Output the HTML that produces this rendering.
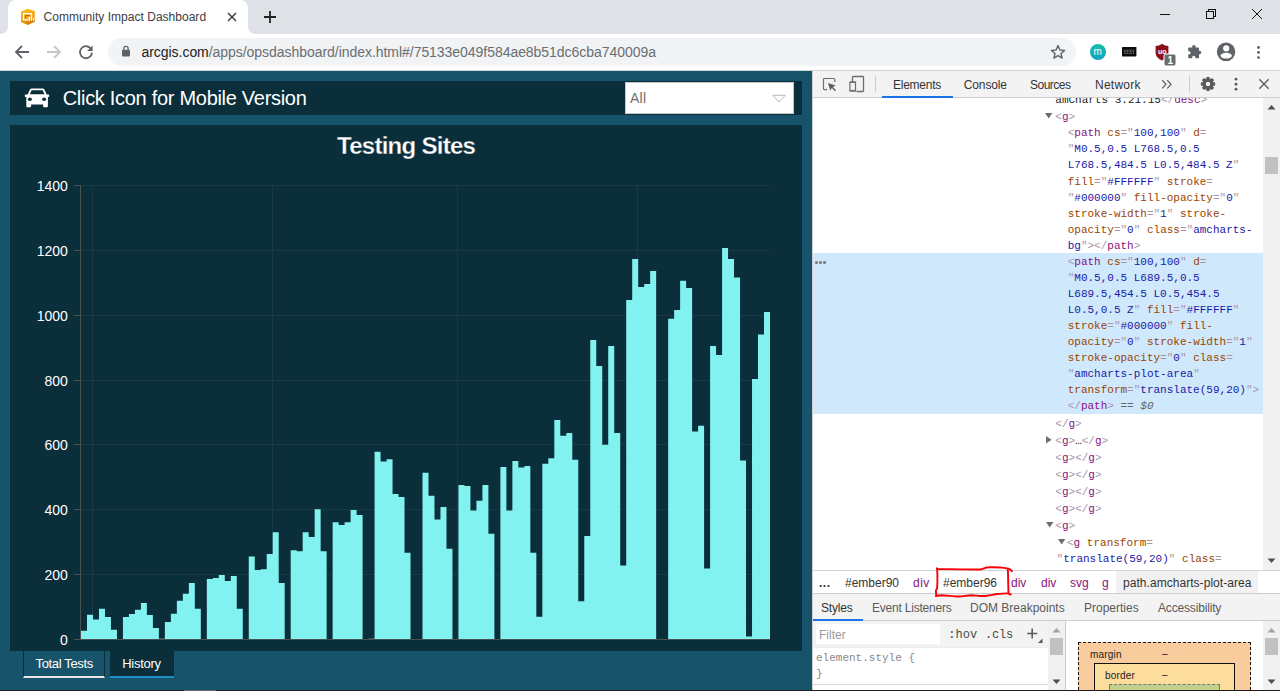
<!DOCTYPE html>
<html><head><meta charset="utf-8"><title>Community Impact Dashboard</title>
<style>
*{box-sizing:border-box;margin:0;padding:0}
html,body{width:1280px;height:691px;overflow:hidden;background:#fff}
body{position:relative;font-family:"Liberation Sans",sans-serif;font-size:12px;color:#333}
.abs{position:absolute}
.t{position:absolute;white-space:nowrap;line-height:1}
/* chrome */
#tabstrip{left:0;top:0;width:1280px;height:34px;background:#dee1e6}
#tab{left:8px;top:0;width:240px;height:34px;background:#fff;border-radius:8px 8px 0 0}
#toolbar{left:0;top:34px;width:1280px;height:36px;background:#fff}
#tbline{left:0;top:70px;width:1280px;height:1px;background:#d0d3d6}
#omni{left:108px;top:38px;width:968px;height:28px;border-radius:14px;background:#f1f3f4}
/* page */
#page{left:0;top:71px;width:812px;height:619px;background:#17536b}
#hdr{left:10px;top:81px;width:792px;height:34px;background:#0b2e3b}
#panel{left:10px;top:125px;width:792px;height:526px;background:#0b2e3b}
#sel{left:625px;top:82px;width:169px;height:32px;background:#fff;border:1px solid #c8c8c8}
/* devtools */
#dt{left:812px;top:71px;width:468px;height:619px;background:#fff;border-left:1px solid #d0d0d0}
#dtbar{left:813px;top:71px;width:467px;height:27px;background:#f3f3f3;border-bottom:1px solid #cdcdcd}
.mono{font-family:"Liberation Mono",monospace;font-size:11px}
#tree{left:813px;top:98px;width:450px;height:473px;overflow:hidden}
.ln{position:absolute;left:0;white-space:pre;height:16px;line-height:16px;font-family:"Liberation Mono",monospace;font-size:11px;color:#333}
.tg{color:#881280}.p{color:#a894a6}.an{color:#994500}.av{color:#1a1aa6}
.tx{color:#222}.eq{color:#666;font-style:italic}
#bottomline{left:0;top:690px;width:1280px;height:1px;background:#1f1a1a}
</style></head><body>
<!-- ===== Chrome tab strip ===== -->
<div id="tabstrip" class="abs"></div>
<div id="tab" class="abs"></div>
<div id="toolbar" class="abs"></div>
<div id="omni" class="abs"></div>
<div id="tbline" class="abs"></div>
<!-- tab flares -->
<svg class="abs" style="left:0;top:26px" width="256" height="8" viewBox="0 0 256 8"><path d="M0 8 C5 8 8 5 8 0 V8 Z M256 8 C251 8 248 5 248 0 V8 Z" fill="#fff"/></svg>
<!-- favicon -->
<svg class="abs" style="left:20px;top:8px" width="16" height="18" viewBox="0 0 16 18">
<defs><linearGradient id="fg" x1="0" y1="0" x2="0.35" y2="1"><stop offset="0" stop-color="#fbc31a"/><stop offset="0.65" stop-color="#f2a312"/><stop offset="1" stop-color="#d97a06"/></linearGradient></defs>
<path d="M7.8 0.8 L14.8 3.2 V13.8 L7.8 17 L1 14 V3.4 Z" fill="url(#fg)"/>
<path d="M8.2 11.8 H3.5 V5.6 H11.5 V7.4" fill="none" stroke="#fff" stroke-width="1.2"/>
<path d="M5.6 9.8 V7.6 H9.6" fill="none" stroke="#b86a08" stroke-width="1"/>
<rect x="8.5" y="8.9" width="1.5" height="3.9" fill="#fff"/><rect x="10.8" y="7.7" width="1.4" height="5.1" fill="#fff"/><rect x="13.1" y="9.7" width="1.1" height="3.1" fill="#fff"/>
</svg>
<div class="t" style="left:43.5px;top:11.0px;font-family:'Liberation Sans',sans-serif;font-size:12px;color:#3c4043;letter-spacing:0.02px;">Community Impact Dashboard</div>
<!-- tab close -->
<svg class="abs" style="left:227px;top:12px" width="10" height="10" viewBox="0 0 10 10"><path d="M1 1 L9 9 M9 1 L1 9" stroke="#3c4043" stroke-width="1.5" fill="none"/></svg>
<!-- new tab plus -->
<svg class="abs" style="left:263px;top:10px" width="14" height="14" viewBox="0 0 14 14"><path d="M7 1 V13 M1 7 H13" stroke="#202124" stroke-width="1.8" fill="none"/></svg>
<!-- window controls -->
<svg class="abs" style="left:1150px;top:0" width="130" height="30" viewBox="0 0 130 30" fill="none" stroke="#111" stroke-width="1" shape-rendering="crispEdges">
<path d="M10 14.5 H20"/>
<path d="M56.5 11.5 H63.5 V18.5 H56.5 Z M58.5 11.5 V9.5 H65.5 V16.5 H63.5"/>
</svg>
<svg class="abs" style="left:1251px;top:8px" width="12" height="12" viewBox="0 0 12 12"><path d="M1 1 L11 11 M11 1 L1 11" stroke="#111" stroke-width="1" fill="none"/></svg>
<!-- nav arrows -->
<svg class="abs" style="left:14px;top:44px" width="16" height="16" viewBox="0 0 16 16"><path d="M15 8 H2.5 M8 2 L2 8 L8 14" stroke="#5f6368" stroke-width="1.8" fill="none"/></svg>
<svg class="abs" style="left:46px;top:44px" width="16" height="16" viewBox="0 0 16 16"><path d="M1 8 H13.5 M8 2 L14 8 L8 14" stroke="#c4c7ca" stroke-width="1.8" fill="none"/></svg>
<svg class="abs" style="left:78px;top:44px" width="16" height="16" viewBox="0 0 16 16"><path d="M13.2 5.2 A6 6 0 1 0 14 8.6" stroke="#5f6368" stroke-width="1.8" fill="none"/><path d="M14.6 1.6 V7 H9.2 Z" fill="#5f6368"/></svg>
<!-- lock -->
<svg class="abs" style="left:121px;top:45px" width="10" height="12" viewBox="0 0 10 12"><rect x="1" y="4.8" width="8" height="6.6" rx="0.8" fill="#5f6368"/><path d="M2.9 5 V3.4 A2.1 2.1 0 0 1 7.1 3.4 V5" stroke="#5f6368" stroke-width="1.3" fill="none"/></svg>
<div class="t" style="left:141.5px;top:45.0px;font-family:'Liberation Sans',sans-serif;font-size:14px;color:#6a6e73;letter-spacing:-0.044px;"><span style="color:#202124">arcgis.com</span>/apps/opsdashboard/index.html#/75133e049f584ae8b51dc6cba740009a</div>
<!-- star -->
<svg class="abs" style="left:1050px;top:44px" width="16" height="16" viewBox="0 0 16 16"><path d="M8 1.6 L9.9 6 L14.6 6.4 L11 9.5 L12.1 14.1 L8 11.6 L3.9 14.1 L5 9.5 L1.4 6.4 L6.1 6 Z" fill="none" stroke="#5f6368" stroke-width="1.4" stroke-linejoin="round"/></svg>
<!-- ext: m circle -->
<div class="abs" style="left:1090px;top:44px;width:16px;height:16px;border-radius:8px;background:linear-gradient(#15bfa8,#0fa2c3)"></div>
<div class="t" style="left:1093.6px;top:47.2px;font-size:10px;color:#fff;letter-spacing:0.3px">m</div>
<!-- keyboard -->
<svg class="abs" style="left:1122px;top:47px" width="15" height="10" viewBox="0 0 15 10"><rect x="0" y="0" width="14.4" height="9.4" rx="0.6" fill="#0c0c0c"/><path d="M2 3.2 H12.6 M2 4.8 H12.6" stroke="#9a9a9a" stroke-width="0.9" stroke-dasharray="0.9 0.6"/><path d="M2.5 6.4 H12" stroke="#8a8a8a" stroke-width="0.8" stroke-dasharray="1.6 0.5"/></svg>
<!-- ublock -->
<svg class="abs" style="left:1154px;top:43px" width="24" height="24" viewBox="0 0 24 24"><path d="M8 0.8 C10 2.4 12.3 3 14.4 3 V9.5 C14.4 13.5 11.5 16 8 17.4 C4.5 16 1.6 13.5 1.6 9.5 V3 C3.7 3 6 2.4 8 0.8 Z" fill="#8b1018"/><rect x="10" y="11" width="12" height="12" rx="2" fill="#6b6b6b" stroke="#fff" stroke-width="1"/></svg>
<div class="t" style="left:1158px;top:48px;font-size:7px;font-weight:bold;color:#fff">uo</div>
<div class="t" style="left:1167.5px;top:55.5px;font-size:10px;font-weight:bold;color:#fff">1</div>
<!-- puzzle -->
<svg class="abs" style="left:1186px;top:44px" width="16" height="16" viewBox="0 0 16 16"><path d="M6.2 2.6 A1.7 1.7 0 0 1 9.6 2.6 V3.4 H12.2 C12.7 3.4 13 3.7 13 4.2 V6.8 H13.6 A1.7 1.7 0 0 1 13.6 10.2 H13 V13.4 C13 13.9 12.7 14.2 12.2 14.2 H9.4 V13.4 A1.6 1.6 0 0 0 6.2 13.4 V14.2 H3 C2.5 14.2 2.2 13.9 2.2 13.4 V10.4 H3 A1.6 1.6 0 0 0 3 7.2 H2.2 V4.2 C2.2 3.7 2.5 3.4 3 3.4 H6.2 Z" fill="#5f6368"/></svg>
<!-- avatar -->
<svg class="abs" style="left:1216px;top:42px" width="20" height="20" viewBox="0 0 20 20"><circle cx="10.05" cy="9.85" r="9.25" fill="#5f6368"/><circle cx="10.2" cy="6.4" r="3.05" fill="#fff"/><ellipse cx="10.2" cy="13.7" rx="5.75" ry="2.9" fill="#fff"/></svg>
<!-- menu dots -->
<svg class="abs" style="left:1255px;top:45px" width="7" height="16" viewBox="0 0 7 16" fill="#5f6368"><circle cx="3.5" cy="2.5" r="1.45"/><circle cx="3.5" cy="7.4" r="1.45"/><circle cx="3.5" cy="12.6" r="1.45"/></svg>

<!-- ===== Page ===== -->
<div id="page" class="abs"></div>
<div id="hdr" class="abs"></div>
<div id="panel" class="abs"></div>
<div id="sel" class="abs"></div>
<!-- car icon -->
<svg class="abs" style="left:20px;top:82px" width="40" height="30" viewBox="0 0 40 30">
<path fill="#fff" d="M7.6 12.4 L10 7.6 C10.4 6.9 11 6.5 11.8 6.5 H22.6 C23.4 6.5 24 6.9 24.4 7.6 L26.7 12.4 H28.4 C28.9 12.4 29.2 12.7 29.2 13.2 V14.3 C29.2 14.8 28.9 15.1 28.4 15.1 H27.9 V23.9 C27.9 24.8 27.4 25.3 26.5 25.3 H24.5 C23.6 25.3 23.1 24.8 23.1 23.9 V22.4 H11.1 V23.9 C11.1 24.8 10.6 25.3 9.7 25.3 H7.7 C6.8 25.3 6.3 24.8 6.3 23.9 V15.1 H5.6 C5.1 15.1 4.8 14.8 4.8 14.3 V13.2 C4.8 12.7 5.1 12.4 5.6 12.4 Z M9.8 12.2 H24.5 L22.7 8.2 H11.6 Z"/>
<ellipse cx="9.9" cy="17.3" rx="2" ry="1.8" fill="#0b2e3b"/><ellipse cx="24.1" cy="17.3" rx="2" ry="1.8" fill="#0b2e3b"/>
</svg>
<!-- select arrow -->
<svg class="abs" style="left:771px;top:93px" width="16" height="11" viewBox="0 0 16 11"><path d="M1.8 2.3 H14.2 L8 9 Z" fill="none" stroke="#b9b9b9" stroke-width="1"/></svg>
<!-- bottom tabs -->
<div class="abs" style="left:23px;top:651px;width:82px;height:27px;background:#17536b;border-left:1px solid #0b2e3b;border-right:1px solid #0b2e3b;border-bottom:2px solid #e6e6e6"></div>
<div class="abs" style="left:110px;top:651px;width:64px;height:27px;background:#0b2e3b;border-bottom:2px solid #1f8ec4"></div>
<div class="t" style="left:62.7px;top:88.2px;font-family:'Liberation Sans',sans-serif;font-size:20px;color:#fff;letter-spacing:-0.293px;">Click Icon for Mobile Version</div>
<div class="t" style="left:630.0px;top:91.0px;font-family:'Liberation Sans',sans-serif;font-size:14px;color:#6e6e6e;letter-spacing:0.25px;">All</div>
<div class="t" style="left:337.0px;top:133.6px;font-family:'Liberation Sans',sans-serif;font-size:24px;color:#fff;letter-spacing:-0.725px;font-weight:bold;-webkit-text-stroke:0.3px #0b2e3b">Testing Sites</div>
<div class="t" style="left:35.6px;top:656.8px;font-family:'Liberation Sans',sans-serif;font-size:13px;color:#fff;letter-spacing:-0.36px;">Total Tests</div>
<div class="t" style="left:122.2px;top:656.8px;font-family:'Liberation Sans',sans-serif;font-size:13px;color:#fff;letter-spacing:-0.267px;">History</div>

<svg class="abs" style="left:0;top:0" width="812" height="691" viewBox="0 0 812 691">
<g id="grid" stroke="#183a46" stroke-width="1" shape-rendering="crispEdges">
<line x1="81" y1="574.5" x2="770" y2="574.5"/>
<line x1="81" y1="509.5" x2="770" y2="509.5"/>
<line x1="81" y1="444.5" x2="770" y2="444.5"/>
<line x1="81" y1="380.5" x2="770" y2="380.5"/>
<line x1="81" y1="315.5" x2="770" y2="315.5"/>
<line x1="81" y1="250.5" x2="770" y2="250.5"/>
<line x1="81" y1="185.5" x2="770" y2="185.5"/>
<line x1="92.5" y1="185" x2="92.5" y2="639"/>
<line x1="272.5" y1="185" x2="272.5" y2="639"/>
<line x1="457.5" y1="185" x2="457.5" y2="639"/>
<line x1="637.5" y1="185" x2="637.5" y2="639"/>
</g>
<path d="M81.00,639.30L81.00,630.80L86.99,630.80L86.99,614.70L92.98,614.70L92.98,619.60L98.97,619.60L98.97,608.70L104.97,608.70L104.97,616.90L110.96,616.90L110.96,629.70L116.95,629.70L116.95,639.30L122.94,639.30L122.94,616.90L128.93,616.90L128.93,614.00L134.92,614.00L134.92,609.80L140.91,609.80L140.91,602.90L146.90,602.90L146.90,614.90L152.90,614.90L152.90,627.90L158.89,627.90L158.89,638.80L164.88,638.80L164.88,621.90L170.87,621.90L170.87,613.80L176.86,613.80L176.86,600.80L182.85,600.80L182.85,593.70L188.84,593.70L188.84,582.90L194.83,582.90L194.83,608.70L200.83,608.70L200.83,639.30L206.82,639.30L206.82,578.90L212.81,578.90L212.81,578.00L218.80,578.00L218.80,574.90L224.79,574.90L224.79,580.90L230.78,580.90L230.78,576.00L236.77,576.00L236.77,608.70L242.77,608.70L242.77,639.30L248.76,639.30L248.76,556.40L254.75,556.40L254.75,570.00L260.74,570.00L260.74,569.20L266.73,569.20L266.73,554.00L272.72,554.00L272.72,532.30L278.71,532.30L278.71,583.10L284.70,583.10L284.70,639.30L290.70,639.30L290.70,550.30L296.69,550.30L296.69,551.20L302.68,551.20L302.68,532.30L308.67,532.30L308.67,537.00L314.66,537.00L314.66,509.30L320.65,509.30L320.65,551.20L326.64,551.20L326.64,639.30L332.63,639.30L332.63,522.30L338.63,522.30L338.63,524.90L344.62,524.90L344.62,522.30L350.61,522.30L350.61,510.10L356.60,510.10L356.60,515.10L362.59,515.10L362.59,639.30L368.58,639.30L368.58,638.80L374.57,638.80L374.57,451.80L380.57,451.80L380.57,461.60L386.56,461.60L386.56,459.20L392.55,459.20L392.55,493.90L398.54,493.90L398.54,496.90L404.53,496.90L404.53,552.70L410.52,552.70L410.52,639.30L416.51,639.30L416.51,639.30L422.50,639.30L422.50,472.80L428.50,472.80L428.50,495.70L434.49,495.70L434.49,519.40L440.48,519.40L440.48,507.00L446.47,507.00L446.47,548.80L452.46,548.80L452.46,639.30L458.45,639.30L458.45,485.00L464.44,485.00L464.44,485.90L470.43,485.90L470.43,510.50L476.43,510.50L476.43,500.70L482.42,500.70L482.42,485.00L488.41,485.00L488.41,533.70L494.40,533.70L494.40,639.30L500.39,639.30L500.39,466.90L506.38,466.90L506.38,510.50L512.37,510.50L512.37,461.00L518.37,461.00L518.37,467.50L524.36,467.50L524.36,466.00L530.35,466.00L530.35,552.70L536.34,552.70L536.34,616.70L542.33,616.70L542.33,463.80L548.32,463.80L548.32,458.20L554.31,458.20L554.31,420.00L560.30,420.00L560.30,435.70L566.30,435.70L566.30,432.90L572.29,432.90L572.29,459.80L578.28,459.80L578.28,601.30L584.27,601.30L584.27,535.90L590.26,535.90L590.26,339.90L596.25,339.90L596.25,365.90L602.24,365.90L602.24,444.70L608.23,444.70L608.23,345.90L614.23,345.90L614.23,432.90L620.22,432.90L620.22,565.40L626.21,565.40L626.21,299.90L632.20,299.90L632.20,259.10L638.19,259.10L638.19,286.90L644.18,286.90L644.18,284.00L650.17,284.00L650.17,271.00L656.17,271.00L656.17,639.30L662.16,639.30L662.16,639.30L668.15,639.30L668.15,318.70L674.14,318.70L674.14,310.00L680.13,310.00L680.13,280.80L686.12,280.80L686.12,288.00L692.11,288.00L692.11,431.50L698.10,431.50L698.10,425.80L704.10,425.80L704.10,568.60L710.09,568.60L710.09,345.90L716.08,345.90L716.08,354.90L722.07,354.90L722.07,248.10L728.06,248.10L728.06,259.10L734.05,259.10L734.05,277.60L740.04,277.60L740.04,460.60L746.03,460.60L746.03,636.40L752.03,636.40L752.03,378.90L758.02,378.90L758.02,334.60L764.01,334.60L764.01,312.10L770.00,312.10L770.00,639.30Z" fill="#82f2f0"/>
<g id="axis" stroke="#4b5052" stroke-width="1" shape-rendering="crispEdges">
<line x1="74" y1="639.5" x2="80" y2="639.5"/>
<line x1="74" y1="574.5" x2="80" y2="574.5"/>
<line x1="74" y1="509.5" x2="80" y2="509.5"/>
<line x1="74" y1="444.5" x2="80" y2="444.5"/>
<line x1="74" y1="380.5" x2="80" y2="380.5"/>
<line x1="74" y1="315.5" x2="80" y2="315.5"/>
<line x1="74" y1="250.5" x2="80" y2="250.5"/>
<line x1="74" y1="185.5" x2="80" y2="185.5"/>
<line x1="80.5" y1="185" x2="80.5" y2="640"/>
<line x1="80" y1="639.5" x2="770" y2="639.5"/>
</g>
<g id="ylab" font-family="Liberation Sans, sans-serif" font-size="14" fill="#ffffff" text-anchor="end">
<text x="67.9" y="644.9">0</text>
<text x="67.9" y="579.9">200</text>
<text x="67.9" y="514.9">400</text>
<text x="67.9" y="449.9">600</text>
<text x="67.9" y="385.9">800</text>
<text x="67.9" y="320.9">1000</text>
<text x="67.9" y="255.9">1200</text>
<text x="67.9" y="190.9">1400</text>
</g>
</svg>
<!-- ===== DevTools ===== -->
<div id="dt" class="abs"></div>
<div id="dtbar" class="abs"></div>
<!-- toolbar icons -->
<svg class="abs" style="left:822px;top:77px" width="16" height="16" viewBox="0 0 16 16"><path d="M5 12.7 H2.5 C1.9 12.7 1.5 12.3 1.5 11.7 V2.5 C1.5 1.9 1.9 1.5 2.5 1.5 H11.8 C12.4 1.5 12.8 1.9 12.8 2.5 V5" fill="none" stroke="#6e6e6e" stroke-width="1.2"/><path d="M6 6 L13.6 8.6 L10.9 9.9 L14 13.3 L13 14.2 L9.9 10.9 L8.2 13.6 Z" fill="#5f5f5f"/></svg>
<svg class="abs" style="left:848px;top:75px" width="18" height="18" viewBox="0 0 18 18"><path d="M4.5 7 V2.3 C4.5 1.8 4.8 1.5 5.3 1.5 H14.7 C15.2 1.5 15.5 1.8 15.5 2.3 V15.7 C15.5 16.2 15.2 16.5 14.7 16.5 H8.5" fill="none" stroke="#6e6e6e" stroke-width="1.3"/><rect x="1.3" y="6.3" width="6.8" height="10.5" rx="0.9" fill="#6e6e6e"/><rect x="2.5" y="8" width="4.4" height="6.9" fill="#f3f3f3"/></svg>
<div class="abs" style="left:875px;top:76px;width:1px;height:16px;background:#cbcbcb"></div>
<div class="abs" style="left:882px;top:95.5px;width:71px;height:2px;background:#1a73e8"></div>
<div class="t" style="left:893.0px;top:79.0px;font-family:'Liberation Sans',sans-serif;font-size:12px;color:#333;letter-spacing:-0.243px;">Elements</div>
<div class="t" style="left:963.8px;top:79.0px;font-family:'Liberation Sans',sans-serif;font-size:12px;color:#333;letter-spacing:-0.133px;">Console</div>
<div class="t" style="left:1030.0px;top:79.0px;font-family:'Liberation Sans',sans-serif;font-size:12px;color:#333;letter-spacing:-0.5px;">Sources</div>
<div class="t" style="left:1095.0px;top:79.0px;font-family:'Liberation Sans',sans-serif;font-size:12px;color:#333;letter-spacing:0.25px;">Network</div>
<svg class="abs" style="left:1161px;top:79px" width="12" height="11" viewBox="0 0 12 11"><path d="M1.2 1.2 L5 5.3 L1.2 9.4 M6.2 1.2 L10 5.3 L6.2 9.4" fill="none" stroke="#5a5a5a" stroke-width="1.2"/></svg>
<div class="abs" style="left:1189px;top:76px;width:1px;height:16px;background:#cbcbcb"></div>
<!-- gear -->
<svg class="abs" style="left:1200px;top:76px" width="16" height="16" viewBox="0 0 16 16"><g fill="#5a5a5a"><circle cx="8" cy="8" r="5.5"/><g id="gt"><rect x="6.3" y="0.9" width="3.4" height="14.2" rx="0.5"/></g><use href="#gt" transform="rotate(45 8 8)"/><use href="#gt" transform="rotate(90 8 8)"/><use href="#gt" transform="rotate(135 8 8)"/></g><circle cx="8" cy="8" r="2.2" fill="#f3f3f3"/></svg>
<svg class="abs" style="left:1233px;top:77px" width="6" height="16" viewBox="0 0 6 16" fill="#5a5a5a"><circle cx="3" cy="2.2" r="1.4"/><circle cx="3" cy="7.2" r="1.4"/><circle cx="3" cy="12.2" r="1.4"/></svg>
<svg class="abs" style="left:1258px;top:78px" width="12" height="12" viewBox="0 0 12 12"><path d="M1.3 1.3 L10.7 10.7 M10.7 1.3 L1.3 10.7" stroke="#5a5a5a" stroke-width="1.3" fill="none"/></svg>
<!-- tree -->
<div id="tree" class="abs">
<div class="abs" style="left:0;top:155px;width:450px;height:161px;background:#cfe8fc"></div>
<div class="ln" style="left:242.3px;top:-6.2px"><span class="tx">amCharts 3.21.15</span><span class="p">&lt;/</span><span class="tg">desc</span><span class="p">&gt;</span></div>
<div class="ln" style="left:242.3px;top:10.7px"><span class="p">&lt;</span><span class="tg">g</span><span class="p">&gt;</span></div>
<div class="ln" style="left:254.7px;top:27.3px"><span class="p">&lt;</span><span class="tg">path</span> <span class="an">cs</span><span class="p">="</span><span class="av">100,100</span><span class="p">"</span> <span class="an">d</span><span class="p">=</span></div>
<div class="ln" style="left:254.7px;top:43.4px"><span class="p">"</span><span class="av">M0.5,0.5 L768.5,0.5</span></div>
<div class="ln" style="left:254.7px;top:59.4px"><span class="av">L768.5,484.5 L0.5,484.5 Z</span><span class="p">"</span></div>
<div class="ln" style="left:254.7px;top:75.5px"><span class="an">fill</span><span class="p">="</span><span class="av">#FFFFFF</span><span class="p">"</span> <span class="an">stroke</span><span class="p">=</span></div>
<div class="ln" style="left:254.7px;top:91.5px"><span class="p">"</span><span class="av">#000000</span><span class="p">"</span> <span class="an">fill-opacity</span><span class="p">="</span><span class="av">0</span><span class="p">"</span></div>
<div class="ln" style="left:254.7px;top:107.5px"><span class="an">stroke-width</span><span class="p">="</span><span class="av">1</span><span class="p">"</span> <span class="an">stroke-</span></div>
<div class="ln" style="left:254.7px;top:123.6px"><span class="an">opacity</span><span class="p">="</span><span class="av">0</span><span class="p">"</span> <span class="an">class</span><span class="p">="</span><span class="av">amcharts-</span></div>
<div class="ln" style="left:254.7px;top:139.7px"><span class="av">bg</span><span class="p">"&gt;</span><span class="p">&lt;/</span><span class="tg">path</span><span class="p">&gt;</span></div>
<div class="ln" style="left:254.7px;top:156.3px"><span class="p">&lt;</span><span class="tg">path</span> <span class="an">cs</span><span class="p">="</span><span class="av">100,100</span><span class="p">"</span> <span class="an">d</span><span class="p">=</span></div>
<div class="ln" style="left:254.7px;top:172.3px"><span class="p">"</span><span class="av">M0.5,0.5 L689.5,0.5</span></div>
<div class="ln" style="left:254.7px;top:188.3px"><span class="av">L689.5,454.5 L0.5,454.5</span></div>
<div class="ln" style="left:254.7px;top:204.3px"><span class="av">L0.5,0.5 Z</span><span class="p">"</span> <span class="an">fill</span><span class="p">="</span><span class="av">#FFFFFF</span><span class="p">"</span></div>
<div class="ln" style="left:254.7px;top:220.3px"><span class="an">stroke</span><span class="p">="</span><span class="av">#000000</span><span class="p">"</span> <span class="an">fill-</span></div>
<div class="ln" style="left:254.7px;top:236.3px"><span class="an">opacity</span><span class="p">="</span><span class="av">0</span><span class="p">"</span> <span class="an">stroke-width</span><span class="p">="</span><span class="av">1</span><span class="p">"</span></div>
<div class="ln" style="left:254.7px;top:252.3px"><span class="an">stroke-opacity</span><span class="p">="</span><span class="av">0</span><span class="p">"</span> <span class="an">class</span><span class="p">=</span></div>
<div class="ln" style="left:254.7px;top:268.3px"><span class="p">"</span><span class="av">amcharts-plot-area</span><span class="p">"</span></div>
<div class="ln" style="left:254.7px;top:284.3px"><span class="an">transform</span><span class="p">="</span><span class="av">translate(59,20)</span><span class="p">"</span><span class="p">&gt;</span></div>
<div class="ln" style="left:254.7px;top:300.3px"><span class="p">&lt;/</span><span class="tg">path</span><span class="p">&gt;</span><span class="eq"> == $0</span></div>
<div class="ln" style="left:242.3px;top:317.9px"><span class="p">&lt;/</span><span class="tg">g</span><span class="p">&gt;</span></div>
<div class="ln" style="left:242.3px;top:334.9px"><span class="p">&lt;</span><span class="tg">g</span><span class="p">&gt;</span><span class="tx">…</span><span class="p">&lt;/</span><span class="tg">g</span><span class="p">&gt;</span></div>
<div class="ln" style="left:242.3px;top:352.1px"><span class="p">&lt;</span><span class="tg">g</span><span class="p">&gt;</span><span class="p">&lt;/</span><span class="tg">g</span><span class="p">&gt;</span></div>
<div class="ln" style="left:242.3px;top:368.9px"><span class="p">&lt;</span><span class="tg">g</span><span class="p">&gt;</span><span class="p">&lt;/</span><span class="tg">g</span><span class="p">&gt;</span></div>
<div class="ln" style="left:242.3px;top:385.8px"><span class="p">&lt;</span><span class="tg">g</span><span class="p">&gt;</span><span class="p">&lt;/</span><span class="tg">g</span><span class="p">&gt;</span></div>
<div class="ln" style="left:242.3px;top:402.8px"><span class="p">&lt;</span><span class="tg">g</span><span class="p">&gt;</span><span class="p">&lt;/</span><span class="tg">g</span><span class="p">&gt;</span></div>
<div class="ln" style="left:242.3px;top:419.8px"><span class="p">&lt;</span><span class="tg">g</span><span class="p">&gt;</span></div>
<div class="ln" style="left:254.0px;top:436.5px"><span class="p">&lt;</span><span class="tg">g</span> <span class="an">transform</span><span class="p">=</span></div>
<div class="ln" style="left:243.6px;top:452.5px"><span class="p">"</span><span class="av">translate(59,20)</span><span class="p">"</span> <span class="an">class</span><span class="p">=</span></div>
<svg class="abs" style="left:232.0px;top:14.5px" width="8" height="6" viewBox="0 0 8 6"><path d="M0 0 H7.4 L3.7 5.6 Z" fill="#6e6e6e"/></svg>
<svg class="abs" style="left:233.0px;top:337.5px" width="6" height="8" viewBox="0 0 6 8"><path d="M0 0 V7.4 L5.6 3.7 Z" fill="#6e6e6e"/></svg>
<svg class="abs" style="left:232.5px;top:423.5px" width="8" height="6" viewBox="0 0 8 6"><path d="M0 0 H7.4 L3.7 5.6 Z" fill="#6e6e6e"/></svg>
<svg class="abs" style="left:244.5px;top:440.5px" width="8" height="6" viewBox="0 0 8 6"><path d="M0 0 H7.4 L3.7 5.6 Z" fill="#6e6e6e"/></svg>
<div class="abs" style="left:2px;top:162.5px;width:3px;height:3px;border-radius:2px;background:#777;box-shadow:4px 0 0 #777,8px 0 0 #777"></div>
</div>
<!-- tree scrollbar -->
<div class="abs" style="left:1263px;top:98px;width:17px;height:473px;background:#f1f1f1"></div>
<div class="abs" style="left:1265px;top:157px;width:13px;height:17px;background:#c1c1c1"></div>
<svg class="abs" style="left:1267px;top:104px" width="9" height="6" viewBox="0 0 9 6"><path d="M0.5 5.5 L4.5 1 L8.5 5.5 Z" fill="#505050"/></svg>
<svg class="abs" style="left:1267px;top:558px" width="9" height="6" viewBox="0 0 9 6"><path d="M0.5 0.5 L4.5 5 L8.5 0.5 Z" fill="#505050"/></svg>
<!-- breadcrumbs -->
<div class="abs" style="left:813px;top:570px;width:467px;height:24px;background:#fff;border-top:1px solid #d4d4d4;border-bottom:1px solid #cdcdcd"></div>
<div class="abs" style="left:1116px;top:571px;width:142px;height:22px;background:#f1f1f1"></div>
<div class="t" style="left:819.0px;top:576.5px;font-family:'Liberation Sans',sans-serif;font-size:12px;color:#333;letter-spacing:0.5px;font-weight:bold">...</div>
<div class="t" style="left:845.0px;top:576.5px;font-family:'Liberation Sans',sans-serif;font-size:12px;color:#333;">#ember90</div>
<div class="t" style="left:913.0px;top:576.5px;font-family:'Liberation Sans',sans-serif;font-size:12px;color:#881280;letter-spacing:0.5px;">div</div>
<div class="t" style="left:943.0px;top:576.5px;font-family:'Liberation Sans',sans-serif;font-size:12px;color:#333;">#ember96</div>
<div class="t" style="left:1011.0px;top:576.5px;font-family:'Liberation Sans',sans-serif;font-size:12px;color:#881280;">div</div>
<div class="t" style="left:1041.0px;top:576.5px;font-family:'Liberation Sans',sans-serif;font-size:12px;color:#881280;">div</div>
<div class="t" style="left:1070.0px;top:576.5px;font-family:'Liberation Sans',sans-serif;font-size:12px;color:#881280;">svg</div>
<div class="t" style="left:1102.0px;top:576.5px;font-family:'Liberation Sans',sans-serif;font-size:12px;color:#881280;">g</div>
<div class="t" style="left:1123.0px;top:576.5px;font-family:'Liberation Sans',sans-serif;font-size:12px;color:#333;letter-spacing:0.045px;">path.amcharts-plot-area</div>
<!-- styles tab bar -->
<div class="abs" style="left:813px;top:594px;width:467px;height:27px;background:#f3f3f3;border-bottom:1px solid #cdcdcd"></div>
<div class="abs" style="left:813px;top:618.5px;width:50px;height:2px;background:#1a73e8"></div>
<div class="t" style="left:821.0px;top:601.5px;font-family:'Liberation Sans',sans-serif;font-size:12px;color:#333;letter-spacing:-0.2px;">Styles</div>
<div class="t" style="left:872.0px;top:601.5px;font-family:'Liberation Sans',sans-serif;font-size:12px;color:#5a5a5a;letter-spacing:-0.214px;">Event Listeners</div>
<div class="t" style="left:970.0px;top:601.5px;font-family:'Liberation Sans',sans-serif;font-size:12px;color:#5a5a5a;">DOM Breakpoints</div>
<div class="t" style="left:1084.0px;top:601.5px;font-family:'Liberation Sans',sans-serif;font-size:12px;color:#5a5a5a;">Properties</div>
<div class="t" style="left:1158.0px;top:601.5px;font-family:'Liberation Sans',sans-serif;font-size:12px;color:#5a5a5a;letter-spacing:-0.167px;">Accessibility</div>
<!-- filter row -->
<div class="abs" style="left:813px;top:621px;width:235px;height:27px;background:#f3f3f3;border-bottom:1px solid #ededed"></div>
<div class="abs" style="left:816px;top:624px;width:124px;height:20px;background:#fff"></div>
<div class="t" style="left:819.0px;top:628.5px;font-family:'Liberation Sans',sans-serif;font-size:12px;color:#9a9a9a;">Filter</div>
<div class="t" style="left:948.3px;top:629.3px;font-family:'Liberation Mono',monospace;font-size:12px;color:#4a4a4a;letter-spacing:0.067px;">:hov</div>
<div class="t" style="left:985.0px;top:629.3px;font-family:'Liberation Mono',monospace;font-size:12px;color:#4a4a4a;letter-spacing:-0.167px;">.cls</div>
<svg class="abs" style="left:1026px;top:627.4px" width="18" height="18" viewBox="0 0 18 18"><path d="M6.2 1.5 V11.5 M1.2 6.5 H11.2" stroke="#5a5a5a" stroke-width="1.6" fill="none"/><path d="M16.5 11.5 V16 H12 Z" fill="#5a5a5a"/></svg>
<!-- element.style -->
<div class="abs" style="left:813px;top:648px;width:235px;height:37px;background:#fff;border-bottom:1px solid #d6d6d6"></div>
<div class="t" style="left:816.0px;top:652.5px;font-family:'Liberation Mono',monospace;font-size:11px;color:#888;">element.style {</div>
<div class="t" style="left:816.0px;top:668.5px;font-family:'Liberation Mono',monospace;font-size:11px;color:#888;">}</div>
<!-- styles scrollbar -->
<div class="abs" style="left:1048px;top:621px;width:17px;height:69px;background:#f1f1f1"></div>
<div class="abs" style="left:1065px;top:621px;width:1px;height:69px;background:#cdcdcd"></div>
<div class="abs" style="left:1050px;top:638px;width:13px;height:17px;background:#c1c1c1"></div>
<svg class="abs" style="left:1052px;top:627px" width="9" height="6" viewBox="0 0 9 6"><path d="M0.5 5.5 L4.5 1 L8.5 5.5 Z" fill="#a3a3a3"/></svg>
<svg class="abs" style="left:1052px;top:679px" width="9" height="6" viewBox="0 0 9 6"><path d="M0.5 0.5 L4.5 5 L8.5 0.5 Z" fill="#505050"/></svg>
<!-- box model -->
<div class="abs" style="left:1078px;top:642px;width:173px;height:48px;background:#f9cc9d;border:1px dashed #111;border-bottom:none"></div>
<div class="abs" style="left:1094px;top:663px;width:141px;height:27px;background:#fddd9b;border:1px solid #111;border-bottom:none"></div>
<div class="abs" style="left:1109px;top:684px;width:111px;height:6px;background:#c3d08b;border:1px dashed #777;border-bottom:none"></div>
<div class="t" style="left:1090.0px;top:649.5px;font-family:'Liberation Sans',sans-serif;font-size:10px;color:#222;letter-spacing:0.2px;">margin</div>
<div class="t" style="left:1105.0px;top:670.5px;font-family:'Liberation Sans',sans-serif;font-size:10px;color:#222;letter-spacing:0.2px;">border</div>
<div class="t" style="left:1162.0px;top:649.2px;font-family:'Liberation Sans',sans-serif;font-size:10px;color:#222;">–</div>
<div class="t" style="left:1162.0px;top:670.2px;font-family:'Liberation Sans',sans-serif;font-size:10px;color:#222;">–</div>
<!-- right scrollbar -->
<div class="abs" style="left:1263px;top:621px;width:17px;height:69px;background:#f1f1f1"></div>
<div class="abs" style="left:1265px;top:638px;width:13px;height:17px;background:#c1c1c1"></div>
<svg class="abs" style="left:1267px;top:627px" width="9" height="6" viewBox="0 0 9 6"><path d="M0.5 5.5 L4.5 1 L8.5 5.5 Z" fill="#a3a3a3"/></svg>
<svg class="abs" style="left:1267px;top:679px" width="9" height="6" viewBox="0 0 9 6"><path d="M0.5 0.5 L4.5 5 L8.5 0.5 Z" fill="#505050"/></svg>
<!-- red annotation -->
<svg class="abs" style="left:930px;top:560px" width="90" height="45" viewBox="0 0 90 45"><g fill="none" stroke="#fb0007" stroke-width="1.9" stroke-linecap="round" stroke-linejoin="round">
<path d="M6.9 8.4 L7.3 9 L31.3 9.4 L50.2 9.5 C53.5 9.2 55 7.4 58.8 7.3 C63 7 67 7.3 71.6 7.6 C74 7.8 76.5 8 78.5 8.6 C80.3 9.3 81.3 10.2 82 11.3"/>
<path d="M77.8 9.3 C78.1 14 78.1 20 78.3 26 L78.5 33.6 L80.8 34.5"/>
<path d="M78.5 33.4 C75 33.3 71 33.6 67.3 34 C63.5 34.5 60.5 35.4 57 35.7 C54.8 36 52.5 36.1 50.2 36 C47 35.8 44.5 35.2 41.6 35.2 C37 35.4 33 36.4 28.7 36.5 C23 36.4 17 35.4 11.5 35.2 C9.5 35.2 7.6 35.6 6 36.1"/>
<path d="M7.1 8.8 C7.4 13 7.5 17 7.4 21 C7.4 24 7.3 26.5 7 28.6 C6.6 29.6 5.9 30 5.9 31 C6 32.8 6.3 34.4 6.3 36"/>
</g></svg>

<div id="bottomline" class="abs"></div>
<div class="abs" style="left:184px;top:690px;width:32px;height:1px;background:#6a6363"></div>
</body></html>
